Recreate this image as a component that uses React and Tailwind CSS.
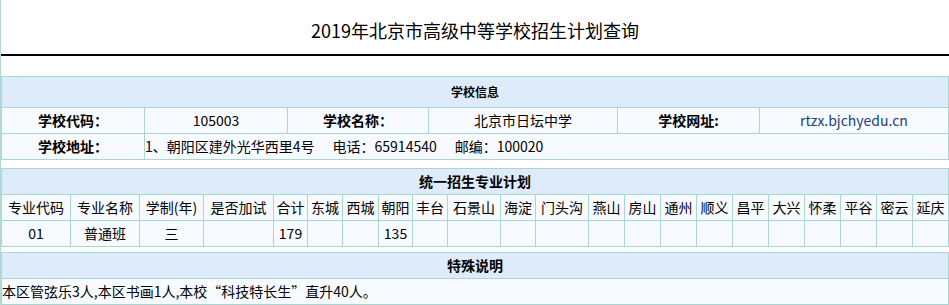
const line = 'border-[#a9d6d1]'

const districts = [
  ['专业代码', 69], ['专业名称', 69], ['学制(年)', 64], ['是否加试', 70], ['合计', 34],
  ['东城', 35], ['西城', 36], ['朝阳', 34], ['丰台', 35], ['石景山', 53], ['海淀', 35],
  ['门头沟', 53], ['燕山', 36], ['房山', 36], ['通州', 36], ['顺义', 36], ['昌平', 36],
  ['大兴', 36], ['怀柔', 36], ['平谷', 36], ['密云', 36], ['延庆', 36],
]

const planRow = ['01', '普通班', '三', '', '179', '', '', '135']

function Cell({ children, className = '' }) {
  return (
    <div className={`h-[26px] border-r border-b ${line} bg-[#f7fbff] flex items-center justify-center whitespace-nowrap ${className}`}>
      {children}
    </div>
  )
}

function Head({ children, className = '' }) {
  return (
    <div className={`border-r border-b ${line} bg-[#deebfa] flex items-center justify-center font-bold ${className}`}>
      {children}
    </div>
  )
}

export default function App() {
  const cols = districts.map(d => d[1] + 'px').join(' ')

  return (
    <div className="w-[949px] h-[305px] bg-white border-l border-[#b0dbd5] text-black text-[14px] font-['Noto_Sans_CJK_SC',sans-serif] overflow-hidden">
      <div className="h-[54px] flex items-center justify-center pt-[6px] text-[18px]">
        2019年北京市高级中等学校招生计划查询
      </div>
      <div className="h-[2px] bg-black" />
      <div className="h-[20px]" />

      {/* 学校信息 */}
      <div className={`grid grid-cols-[143px_143px_141px_189px_142px_189px] border-t border-l ${line}`}>
        <Head className="col-span-6 h-[31px] text-[12px]">学校信息</Head>
        <Cell className="font-bold">学校代码：</Cell>
        <Cell>105003</Cell>
        <Cell className="font-bold">学校名称：</Cell>
        <Cell>北京市日坛中学</Cell>
        <Cell className="font-bold">学校网址:</Cell>
        <Cell className="text-[#23407a]">rtzx.bjchyedu.cn</Cell>
        <Cell className="font-bold">学校地址：</Cell>
        <Cell className="col-span-5 justify-start">
          <span>1、朝阳区建外光华西里4号</span>
          <span className="ml-[18px]">电话：65914540</span>
          <span className="ml-[18px]">邮编：100020</span>
        </Cell>
      </div>

      <div className="h-[8px]" />

      {/* 统一招生专业计划 */}
      <div className={`grid border-t border-l ${line}`} style={{ gridTemplateColumns: cols }}>
        <Head className="col-span-22 h-[26px]">统一招生专业计划</Head>
        {districts.map(([name]) => (
          <Cell key={name}>{name}</Cell>
        ))}
        {districts.map(([name], i) => (
          <Cell key={'v' + name}>{planRow[i] || ''}</Cell>
        ))}
      </div>

      <div className="h-[5px]" />

      {/* 特殊说明 */}
      <div className={`border-t border-l ${line}`}>
        <Head className="h-[26px]">特殊说明</Head>
        <Cell className="justify-start">本区管弦乐3人,本区书画1人,本校“科技特长生”直升40人。</Cell>
      </div>
    </div>
  )
}
